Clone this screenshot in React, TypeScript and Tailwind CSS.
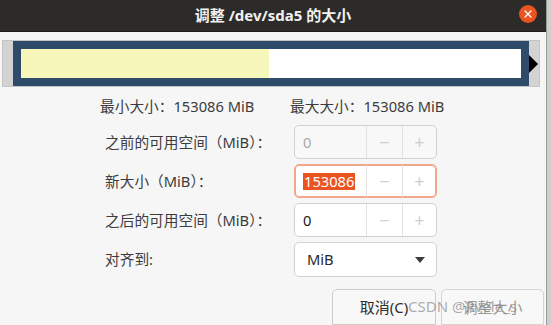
import { X } from "lucide-react";

const FONT = { fontFamily: '"Noto Sans", "Noto Sans CJK SC", sans-serif' };

interface SpinProps {
    value: string;
    variant: "disabled" | "focused" | "normal";
}

const Spin = ({ value, variant }: SpinProps) => {
    const frame =
        variant === "focused"
            ? "border-[#f2a68b] bg-white shadow-[inset_0_0_0_1px_#f2a68b]"
            : variant === "disabled"
            ? "border-[#d5d1cd] bg-[#f8f8f8]"
            : "border-[#d5d1cd] bg-white";
    return (
        <div className={`flex h-[34px] rounded-[5px] border ${frame}`}>
            <div className="flex flex-1 items-center pl-[8px]">
                {variant === "focused" ? (
                    <span className="bg-[#e95420] px-[1px] leading-[17px] text-white">{value}</span>
                ) : (
                    <span className={variant === "disabled" ? "text-[#a8a8a8]" : "text-[#1a1a1a]"}>{value}</span>
                )}
            </div>
            <div className="flex w-[36px] items-center justify-center border-l border-[#e3e0dd] text-[18px] text-[#cfcfcf]">−</div>
            <div className="flex w-[34px] items-center justify-center border-l border-[#e3e0dd] text-[18px] text-[#cfcfcf]">+</div>
        </div>
    );
};

export default function App() {
    return (
        <div className="flex h-[325px] w-[551px] bg-[#cfcfcf]" style={FONT}>
            <div className="flex h-full w-[547px] flex-col overflow-hidden border-r border-[#9a9a9a] bg-[#f6f6f6] text-[14.7px] text-[#3c3c3c]">
                {/* Title bar */}
                <div className="relative flex h-[32px] flex-shrink-0 items-center justify-center bg-[#2d2b29] border-b border-[#1e1d1c]">
                    <span className="text-[15px] font-bold text-[#f2f2f2]">调整 /dev/sda5 的大小</span>
                    <div className="absolute right-[9px] top-[5px] flex h-[18px] w-[18px] items-center justify-center rounded-full bg-[#e95420]">
                        <X size={12} strokeWidth={2.6} className="text-white" />
                    </div>
                </div>

                {/* Partition bar */}
                <div className="mx-[2px] mt-[8px] flex h-[52px] w-[538px] border border-[#c4c4c4] bg-[#d3d3d3]">
                    <div className="ml-[10px] flex w-[516px] bg-[#2f4b6a] p-[8px]">
                        <div className="flex flex-1 bg-white">
                            <div className="w-[248px] bg-[#f7f7bb]" />
                        </div>
                    </div>
                    <div className="flex flex-1 items-center">
                        <svg width="9" height="18" viewBox="0 0 9 18">
                            <polygon points="0,0 9,9 0,18" fill="#000" />
                        </svg>
                    </div>
                </div>

                {/* Limits */}
                <div className="ml-[100px] mt-[9px] flex leading-[20px]">
                    <span className="w-[190px]">最小大小：153086 MiB</span>
                    <span>最大大小：153086 MiB</span>
                </div>

                {/* Fields */}
                <div className="ml-[105px] mt-[9px] grid grid-cols-[189px_143px] gap-y-[5px]">
                    <div className="flex items-center">之前的可用空间（MiB）：</div>
                    <Spin value="0" variant="disabled" />
                    <div className="flex items-center">新大小（MiB）：</div>
                    <Spin value="153086" variant="focused" />
                    <div className="flex items-center">之后的可用空间（MiB）：</div>
                    <Spin value="0" variant="normal" />
                    <div className="flex items-center">对齐到:</div>
                    <div className="flex h-[35px] items-center justify-between rounded-[5px] border border-[#d5d1cd] bg-white pl-[12px] pr-[11px] text-[#2a2a2a]">
                        <span>MiB</span>
                        <svg width="10" height="6" viewBox="0 0 10 6">
                            <polygon points="0,0 10,0 5,6" fill="#3c3c3c" />
                        </svg>
                    </div>
                </div>

                {/* Buttons */}
                <div className="relative mr-[2px] mt-[12px] flex justify-end gap-[5px]">
                    <div className="flex h-[36px] w-[104px] items-center justify-center rounded-t-[5px] border border-[#d0ccc8] bg-[#f8f8f8] text-[15px] text-[#2e2e2e]">
                        取消(C)
                    </div>
                    <div className="flex h-[36px] w-[103px] items-center justify-center rounded-t-[5px] border border-[#d8d4d0] bg-[#f8f8f8] text-[15px] text-[#9a9a9a]">
                        调整大小
                    </div>
                    <span className="absolute left-[408px] top-[6px] text-[15px] text-[#8a8a8a]/70">CSDN @Rvele_s</span>
                </div>
            </div>
        </div>
    );
}
